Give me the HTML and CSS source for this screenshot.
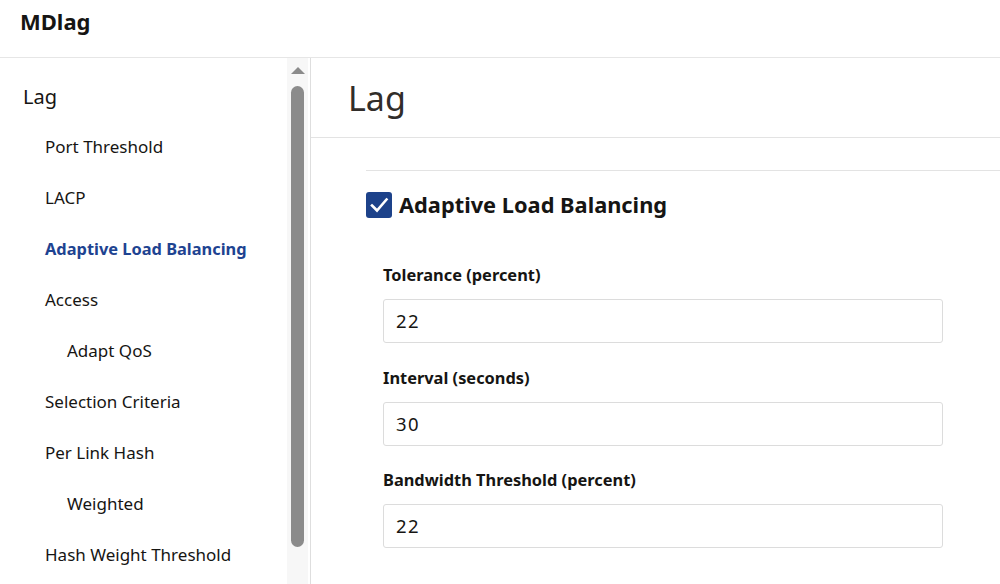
FILE: index.html
```html
<!DOCTYPE html>
<html>
<head>
<meta charset="utf-8">
<link rel="stylesheet" href="styles.css">
</head>
<body>
<header class="top">MDlag</header>
<div class="layout">
  <aside class="side">
    <nav class="nav">
      <div class="nav-item root">Lag</div>
      <div class="nav-item">Port Threshold</div>
      <div class="nav-item">LACP</div>
      <div class="nav-item active">Adaptive Load Balancing</div>
      <div class="nav-item">Access</div>
      <div class="nav-item sub">Adapt QoS</div>
      <div class="nav-item">Selection Criteria</div>
      <div class="nav-item">Per Link Hash</div>
      <div class="nav-item sub">Weighted</div>
      <div class="nav-item">Hash Weight Threshold</div>
    </nav>
    <div class="scrollbar">
      <div class="arrow"></div>
      <div class="thumb"></div>
    </div>
  </aside>
  <main class="main">
    <h1 class="page-title">Lag</h1>
    <section class="section">
      <div class="section-head">
        <span class="checkbox">
          <svg width="20" height="20" viewBox="0 0 20 20"><path d="M3 10.5 L8 15.5 L17.5 4.5" fill="none" stroke="#fff" stroke-width="2.6" stroke-linecap="square"/></svg>
        </span>
        <span class="section-title">Adaptive Load Balancing</span>
      </div>
      <div class="fields">
        <label class="field">
          <span class="label">Tolerance (percent)</span>
          <span class="input">22</span>
        </label>
        <label class="field">
          <span class="label">Interval (seconds)</span>
          <span class="input">30</span>
        </label>
        <label class="field">
          <span class="label">Bandwidth Threshold (percent)</span>
          <span class="input">22</span>
        </label>
      </div>
    </section>
  </main>
</div>
</body>
</html>
```
FILE: styles.css
```css
html, body {
  margin: 0;
  padding: 0;
  background: #fff;
  font-family: "Noto Sans", "Open Sans", sans-serif;
  color: #161513;
  overflow: hidden;
  height: 584px;
}
.top {
  height: 58px;
  box-sizing: border-box;
  border-bottom: 1px solid #e6e6e6;
  padding: 5px 0 0 20px;
  font-size: 22px;
  font-weight: 700;
  line-height: 32px;
}
.layout {
  display: flex;
  height: 526px;
}
.side {
  width: 310px;
  flex: none;
  display: flex;
  border-right: 1px solid #dedede;
  box-sizing: content-box;
}
.nav {
  flex: 1;
  padding-top: 30px;
}
.nav-item {
  font-size: 17px;
  line-height: 24px;
  height: 51px;
  padding-left: 45px;
  box-sizing: border-box;
}
.nav-item.root {
  font-size: 20px;
  padding-left: 23px;
  height: 54px;
  line-height: 30px;
  margin-top: -7px;
  padding-top: 1px;
}
.nav-item.sub { padding-left: 67px; }
.nav-item.active {
  color: #1e4391;
  font-weight: 700;
  font-size: 16.4px;
}
.scrollbar {
  width: 21px;
  background: #f7f7f7;
  display: flex;
  flex-direction: column;
  align-items: center;
  padding-top: 9px;
  box-sizing: border-box;
  margin-right: 2px;
}
.arrow {
  width: 0;
  height: 0;
  border-left: 7px solid transparent;
  border-right: 7px solid transparent;
  border-bottom: 7px solid #8b8b8b;
  margin-bottom: 12px;
}
.thumb {
  width: 13px;
  height: 461px;
  background: #8b8b8b;
  border-radius: 7px;
}
.main {
  flex: 1;
  min-width: 0;
}
.page-title {
  margin: 0;
  font-size: 34px;
  font-weight: 400;
  color: #312d2a;
  height: 80px;
  box-sizing: border-box;
  border-bottom: 1px solid #e3e3e3;
  padding: 17px 0 0 37px;
  line-height: 46px;
}
.section {
  margin-left: 55px;
  margin-top: 32px;
  border-top: 1px solid #e3e3e3;
}
.section-head {
  display: flex;
  align-items: center;
  margin-top: 20px;
  height: 28px;
}
.checkbox {
  width: 26px;
  height: 26px;
  background: #1d428a;
  border-radius: 3px;
  display: flex;
  align-items: center;
  justify-content: center;
  margin-right: 7px;
}
.section-title {
  font-size: 21.8px;
  font-weight: 700;
  line-height: 28px;
}
.fields {
  padding-left: 17px;
  padding-top: 44px;
  width: 560px;
}
.field {
  display: block;
  margin-bottom: 22.5px;
}
.label {
  display: block;
  font-size: 16.4px;
  font-weight: 700;
  line-height: 24px;
  margin-bottom: 12px;
}
.input {
  display: block;
  height: 44px;
  box-sizing: border-box;
  border: 1px solid #dcdcdc;
  border-radius: 3px;
  font-size: 18.5px;
  line-height: 42px;
  padding-left: 12px;
  letter-spacing: 1.5px;
}
```
